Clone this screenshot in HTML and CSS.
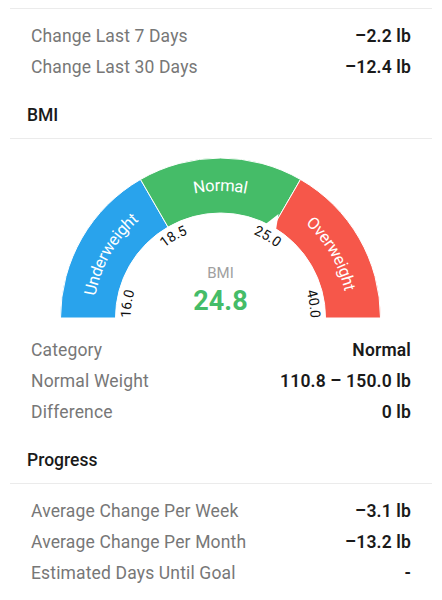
FILE: index.html
```
<!DOCTYPE html>
<html lang="en">
<head>
    <meta charset="UTF-8">
    <meta name="viewport" content="width=device-width, initial-scale=1.0">
    <title>Weight Stats</title>
    <link rel="stylesheet" href="styles.css">
</head>
<body>
    <div class="divider first"></div>

    <div class="rows">
        <div class="row"><span class="label">Change Last 7 Days</span><span class="value">–2.2 lb</span></div>
        <div class="row"><span class="label">Change Last 30 Days</span><span class="value">–12.4 lb</span></div>
    </div>

    <h2 class="section-title">BMI</h2>
    <div class="divider"></div>

    <svg class="gauge" width="442" height="195" viewBox="0 0 442 195">
        <defs>
            <path id="arcUnder" d="M88 179 A132.5 132.5 0 0 1 154.25 64.25"/>
            <path id="arcNormal" d="M154.25 64.25 A132.5 132.5 0 0 1 286.75 64.25"/>
            <path id="arcOver" d="M286.75 64.25 A132.5 132.5 0 0 1 353 179"/>
            <path id="arcTicks" d="M130.5 179 A90 90 0 0 1 310.5 179"/>
        </defs>

        <path class="seg seg-under" d="M60.5 179 A160 160 0 0 1 140.5 40.44 L168 88.07 A105 105 0 0 0 115.5 179 Z"/>
        <path class="seg seg-normal" d="M140.5 40.44 A160 160 0 0 1 300.5 40.44 L273 88.07 A105 105 0 0 0 168 88.07 Z"/>
        <path class="seg seg-over" d="M300.5 40.44 A160 160 0 0 1 380.5 179 L325.5 179 A105 105 0 0 0 273 88.07 Z"/>

        <!-- pointer at 24.8 -->
        <polygon class="pointer" points="265,85.4 276,91 278.5,75"/>

        <text class="band-label"><textPath href="#arcUnder" startOffset="50%" text-anchor="middle" dominant-baseline="central">Underweight</textPath></text>
        <text class="band-label"><textPath href="#arcNormal" startOffset="50%" text-anchor="middle" dominant-baseline="central">Normal</textPath></text>
        <text class="band-label"><textPath href="#arcOver" startOffset="50%" text-anchor="middle" dominant-baseline="central">Overweight</textPath></text>

        <text class="tick"><textPath href="#arcTicks" startOffset="0">16.0</textPath></text>
        <text class="tick"><textPath href="#arcTicks" startOffset="33.33%" text-anchor="middle">18.5</textPath></text>
        <text class="tick"><textPath href="#arcTicks" startOffset="66.67%" text-anchor="middle">25.0</textPath></text>
        <text class="tick"><textPath href="#arcTicks" startOffset="100%" text-anchor="end">40.0</textPath></text>

        <text class="gauge-title" x="220.5" y="139" text-anchor="middle">BMI</text>
        <text class="gauge-value" x="220.5" y="171" text-anchor="middle">24.8</text>
    </svg>

    <div class="rows tight">
        <div class="row"><span class="label">Category</span><span class="value">Normal</span></div>
        <div class="row"><span class="label">Normal Weight</span><span class="value">110.8 – 150.0 lb</span></div>
        <div class="row"><span class="label">Difference</span><span class="value">0 lb</span></div>
    </div>

    <h2 class="section-title">Progress</h2>
    <div class="divider"></div>

    <div class="rows">
        <div class="row"><span class="label">Average Change Per Week</span><span class="value">–3.1 lb</span></div>
        <div class="row"><span class="label">Average Change Per Month</span><span class="value">–13.2 lb</span></div>
        <div class="row"><span class="label">Estimated Days Until Goal</span><span class="value">-</span></div>
    </div>
</body>
</html>
```
FILE: styles.css
```
body {
    margin: 0;
    background: #fff;
    font-family: Roboto, "Noto Sans", sans-serif;
}

.divider {
    height: 1px;
    margin: 0 10px;
    background: #ebebeb;
}

.divider.first {
    margin-top: 8px;
}

.rows {
    padding-top: 11px;
}

.rows.tight {
    padding-top: 0;
}

.row {
    display: flex;
    justify-content: space-between;
    align-items: center;
    height: 31px;
    padding: 0 31px;
    font-size: 17.5px;
    letter-spacing: 0.15px;
}

.label {
    color: #777;
}

.value {
    color: #1a1a1a;
    font-weight: 600;
}

.section-title {
    margin: 0;
    padding: 21px 27px 11px;
    font-size: 17.5px;
    line-height: 24px;
    font-weight: 500;
    color: #1a1a1a;
}

.gauge {
    display: block;
}

.seg {
    stroke: #fff;
    stroke-width: 1;
}

.seg-under {
    fill: #29a3ec;
}

.seg-normal {
    fill: #45bc68;
}

.seg-over {
    fill: #f6574a;
}

.pointer {
    fill: #fff;
}

.band-label {
    fill: #fff;
    font-size: 16.5px;
}

.tick {
    fill: #111;
    font-size: 14px;
}

.gauge-title {
    fill: #a0a0a0;
    font-size: 15px;
}

.gauge-value {
    fill: #45bc68;
    font-size: 27px;
    font-weight: 700;
}
```
